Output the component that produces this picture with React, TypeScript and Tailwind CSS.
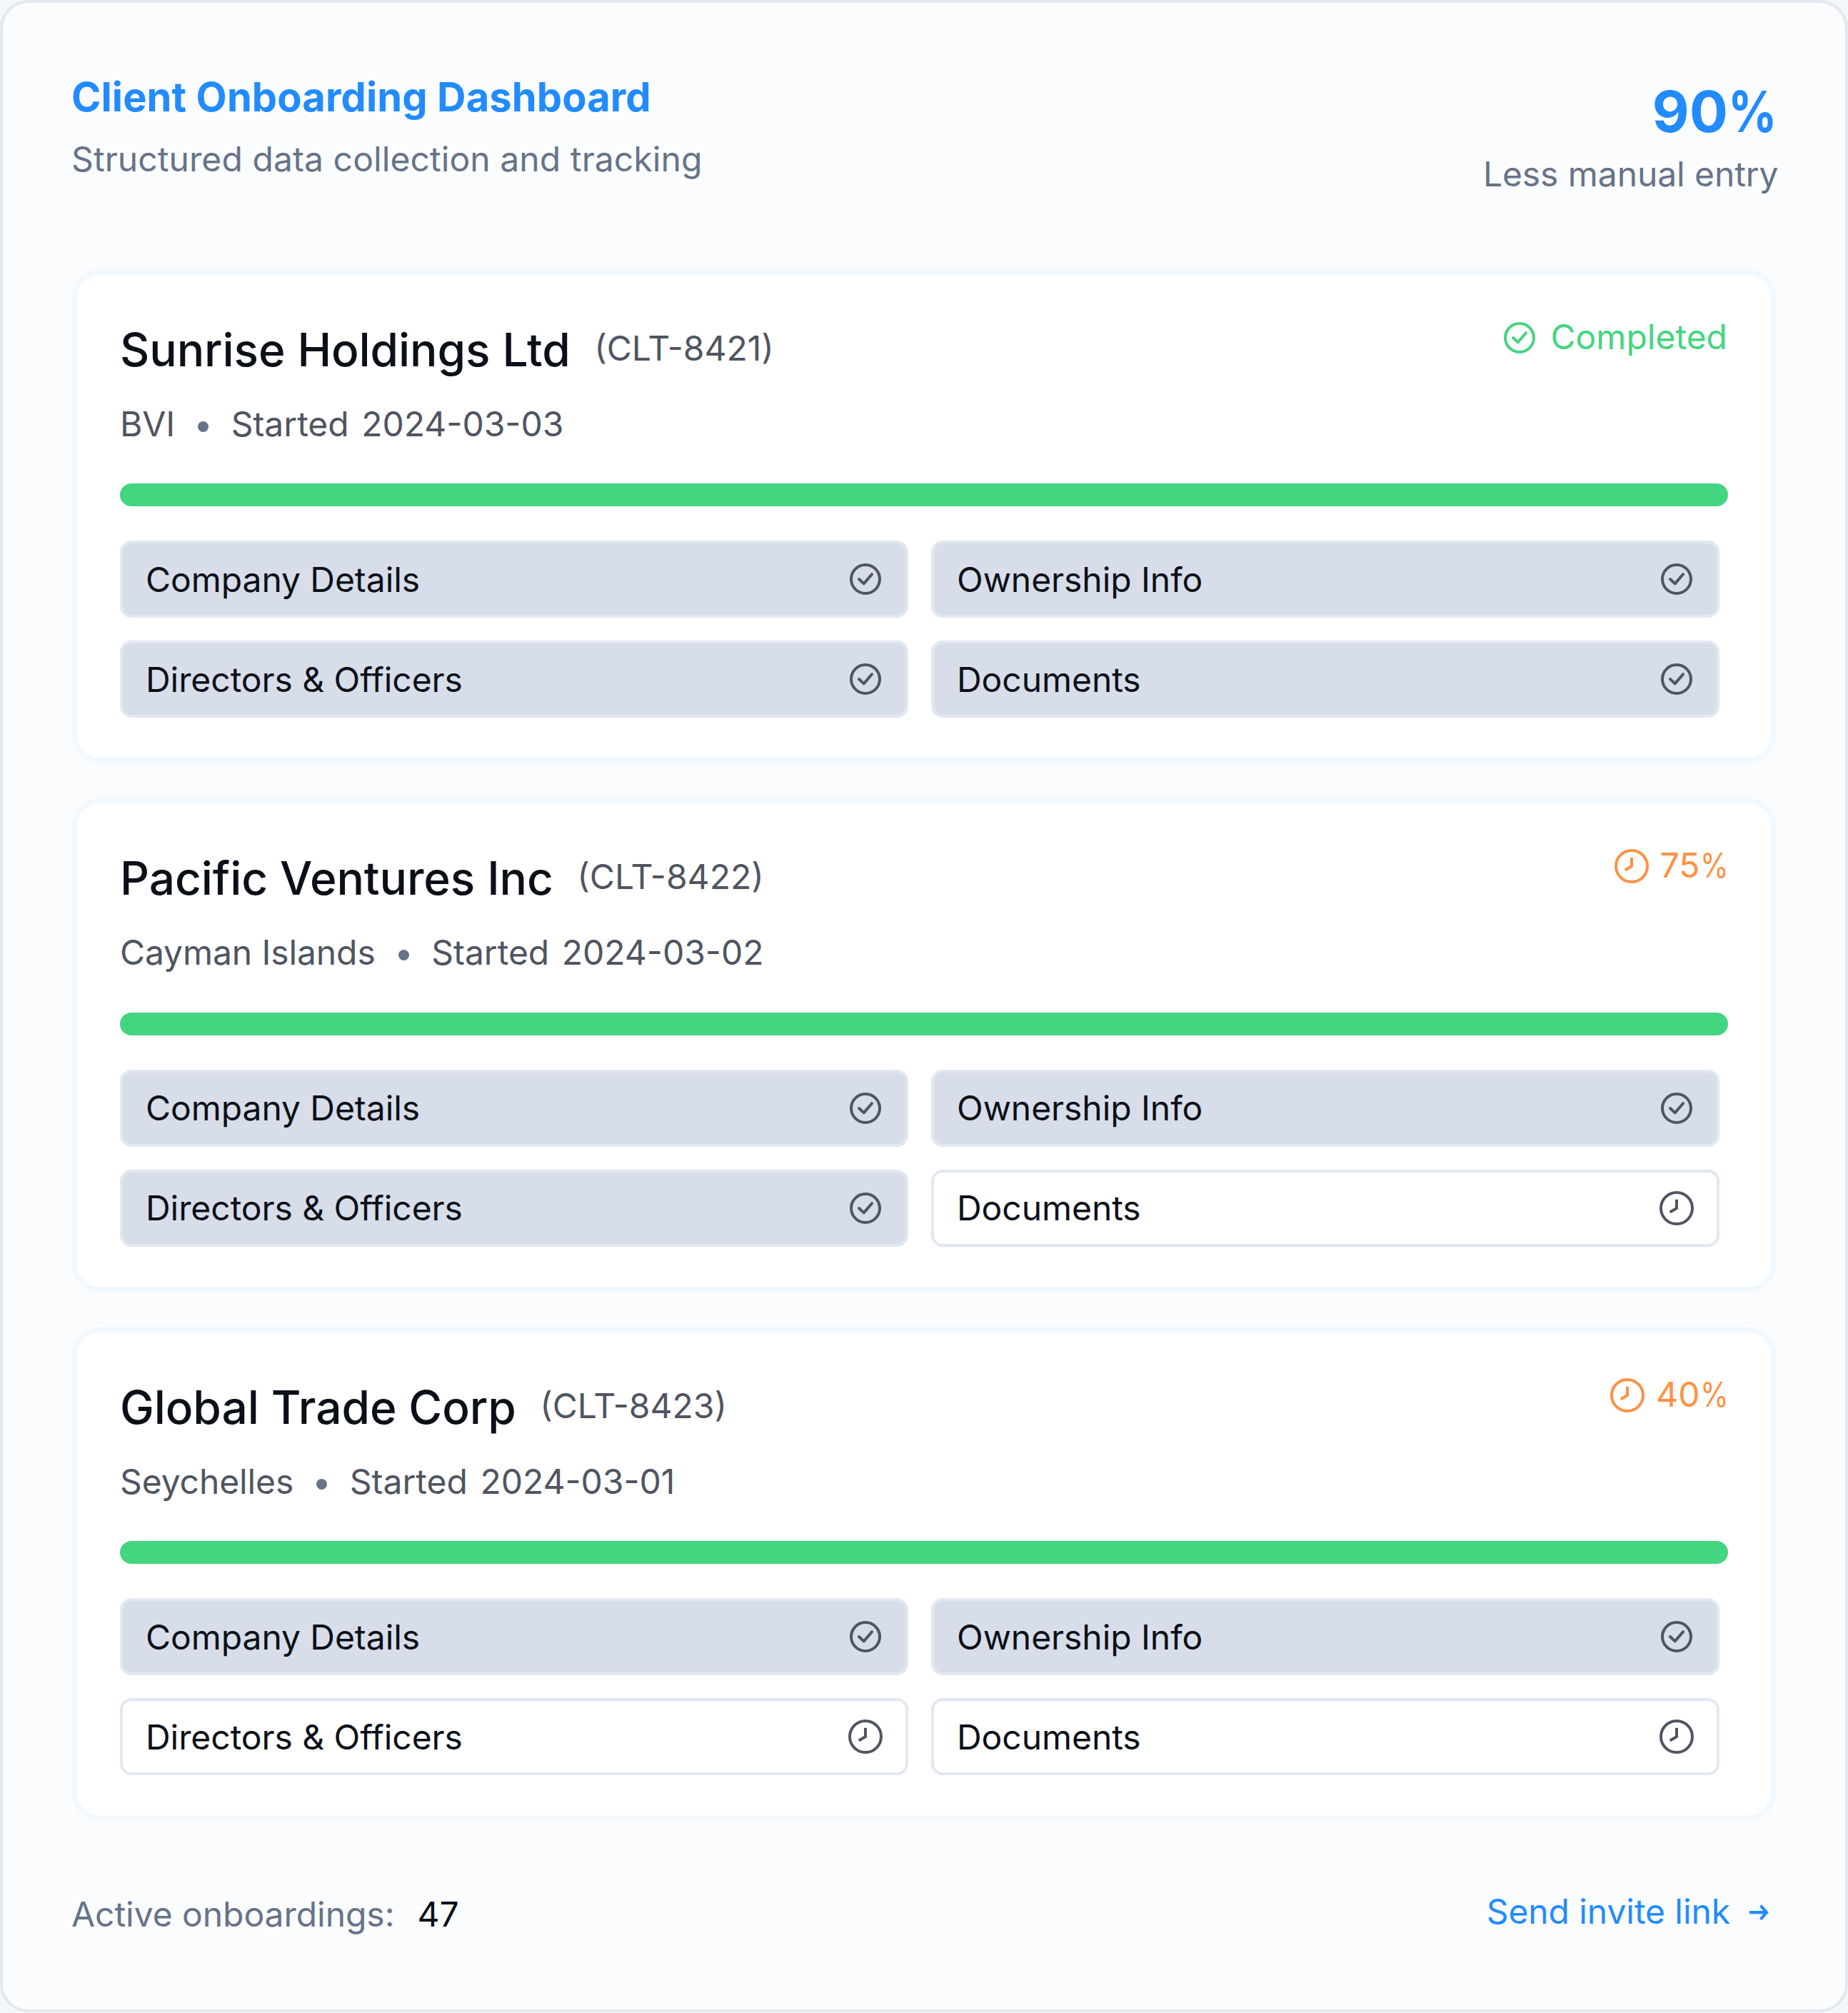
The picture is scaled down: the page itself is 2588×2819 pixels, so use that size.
type Step = { label: string; done: boolean };
type Client = {
  name: string;
  id: string;
  region: string;
  started: string;
  progress: number;
  steps: Step[];
};

const steps = (...done: boolean[]): Step[] =>
  ['Company Details', 'Ownership Info', 'Directors & Officers', 'Documents'].map((label, i) => ({
    label,
    done: done[i],
  }));

const clients: Client[] = [
  { name: 'Sunrise Holdings Ltd', id: 'CLT-8421', region: 'BVI', started: '2024-03-03', progress: 100, steps: steps(true, true, true, true) },
  { name: 'Pacific Ventures Inc', id: 'CLT-8422', region: 'Cayman Islands', started: '2024-03-02', progress: 75, steps: steps(true, true, true, false) },
  { name: 'Global Trade Corp', id: 'CLT-8423', region: 'Seychelles', started: '2024-03-01', progress: 40, steps: steps(true, true, false, false) },
];

function CheckIcon() {
  return (
    <svg className="size-12 shrink-0" viewBox="0 0 48 48" fill="none" stroke="currentColor" strokeWidth="4">
      <circle cx="24" cy="24" r="20" />
      <path d="M15 24l6.7 6.4L33 17.2" strokeLinecap="round" strokeLinejoin="round" />
    </svg>
  );
}

function ClockIcon() {
  return (
    <svg className="size-12 shrink-0" viewBox="0 0 48 48" fill="none" stroke="currentColor" strokeWidth="4">
      <circle cx="24" cy="24" r="22" />
      <path d="M24 11.8V24l-9.3 5.5" />
    </svg>
  );
}

function ArrowIcon() {
  return (
    <svg className="size-12 shrink-0" viewBox="0 0 48 48" fill="none" stroke="currentColor" strokeWidth="4.2">
      <path d="M10 25.2h24M25.6 15.6l8.4 9.6-8.4 9.6" />
    </svg>
  );
}

/* Narrow percent sign used beside figures. */
function Percent({ className }: { className: string }) {
  return <span className={`inline-block origin-left scale-x-[0.845] ${className}`}>%</span>;
}

function StepItem({ label, done }: Step) {
  return (
    <div
      className={`flex h-[108px] items-center justify-between rounded-2xl border-4 border-[#e1e8f0] px-8 ${done ? 'bg-[#d8dee9]' : 'bg-white'}`}
    >
      <span className="pt-px tracking-[-0.06px] text-[#0b1018]">{label}</span>
      {done ? <CheckIcon /> : <ClockIcon />}
    </div>
  );
}

function ClientCard({ client }: { client: Client }) {
  const complete = client.progress === 100;
  return (
    <section className="h-[692.5px] rounded-[40px] border-8 border-[#f1f9ff] bg-white px-[60px] pt-14 text-[#4f5561]">
      <div className="flex items-start justify-between">
        <div className="flex items-start gap-[33.5px]">
          <h2 className="text-[64px] leading-[98px] font-medium tracking-[-0.09px] text-[#0b1018]">{client.name}</h2>
          <span className="leading-[94px]">({client.id})</span>
        </div>
        {complete ? (
          <div className="mr-px flex h-16 items-center gap-5 text-[#43d57f]">
            <CheckIcon />
            <span className="self-start leading-[62px]">Completed</span>
          </div>
        ) : (
          <div className="flex h-16 items-center gap-4 text-[#ff9142]">
            <ClockIcon />
            <span className="self-start leading-[62px]">
              {client.progress}
              <Percent className="-mr-[7.7px]" />
            </span>
          </div>
        )}
      </div>
      <div className="mt-[23px] flex items-center leading-[64px]">
        <span className="tracking-[-0.1px]">{client.region}</span>
        <span className="mt-[7px] mr-[31.5px] ml-8 size-[15px] rounded-full bg-[#667388]" />
        <span className="[word-spacing:4px]">Started {client.started}</span>
      </div>
      <div className="mt-[51.5px] h-8 rounded-2xl bg-[#43d57f]" />
      <div className="mt-12 mr-3 grid grid-cols-2 gap-8">
        {client.steps.map((s) => (
          <StepItem key={s.label} {...s} />
        ))}
      </div>
    </section>
  );
}

export default function App() {
  return (
    <div className="h-[2819px] w-[2588px] bg-[#f4f7f9] font-['Inter',sans-serif] text-[48px] leading-[64px] whitespace-nowrap text-[#667388]">
      <main className="h-[2818px] rounded-[40px] border-4 border-[#e2e8f0] bg-[#fbfcfe] px-24 pt-24">
        <header className="flex items-start justify-between">
          <div>
            <h1 className="text-[56px] leading-[72px] font-bold tracking-[0.12px] text-[#218bff]">
              Client Onboarding Dashboard
            </h1>
            <p className="mt-[19px] tracking-[0.08px]">Structured data collection and tracking</p>
          </div>
          <div className="-mr-[2.5px] pt-2">
            <p className="text-right text-[80px] leading-[96px] font-bold tracking-[0.4px] text-[#218bff]">
              90
              <Percent className="-mr-[11.5px]" />
            </p>
            <p className="mt-2 tracking-[-0.08px]">Less manual entry</p>
          </div>
        </header>
        <div className="mt-[100.5px] flex flex-col gap-12">
          {clients.map((c) => (
            <ClientCard key={c.id} client={c} />
          ))}
        </div>
        <footer className="mt-[95px] flex items-start justify-between">
          <div className="flex gap-8 pt-1">
            <span className="tracking-[-0.05px]">Active onboardings:</span>
            <span className="text-[#0b1018]">47</span>
          </div>
          <a className="flex items-center gap-[17px] tracking-[-0.08px] text-[#218bff]">
            Send invite link
            <ArrowIcon />
          </a>
        </footer>
      </main>
    </div>
  );
}
